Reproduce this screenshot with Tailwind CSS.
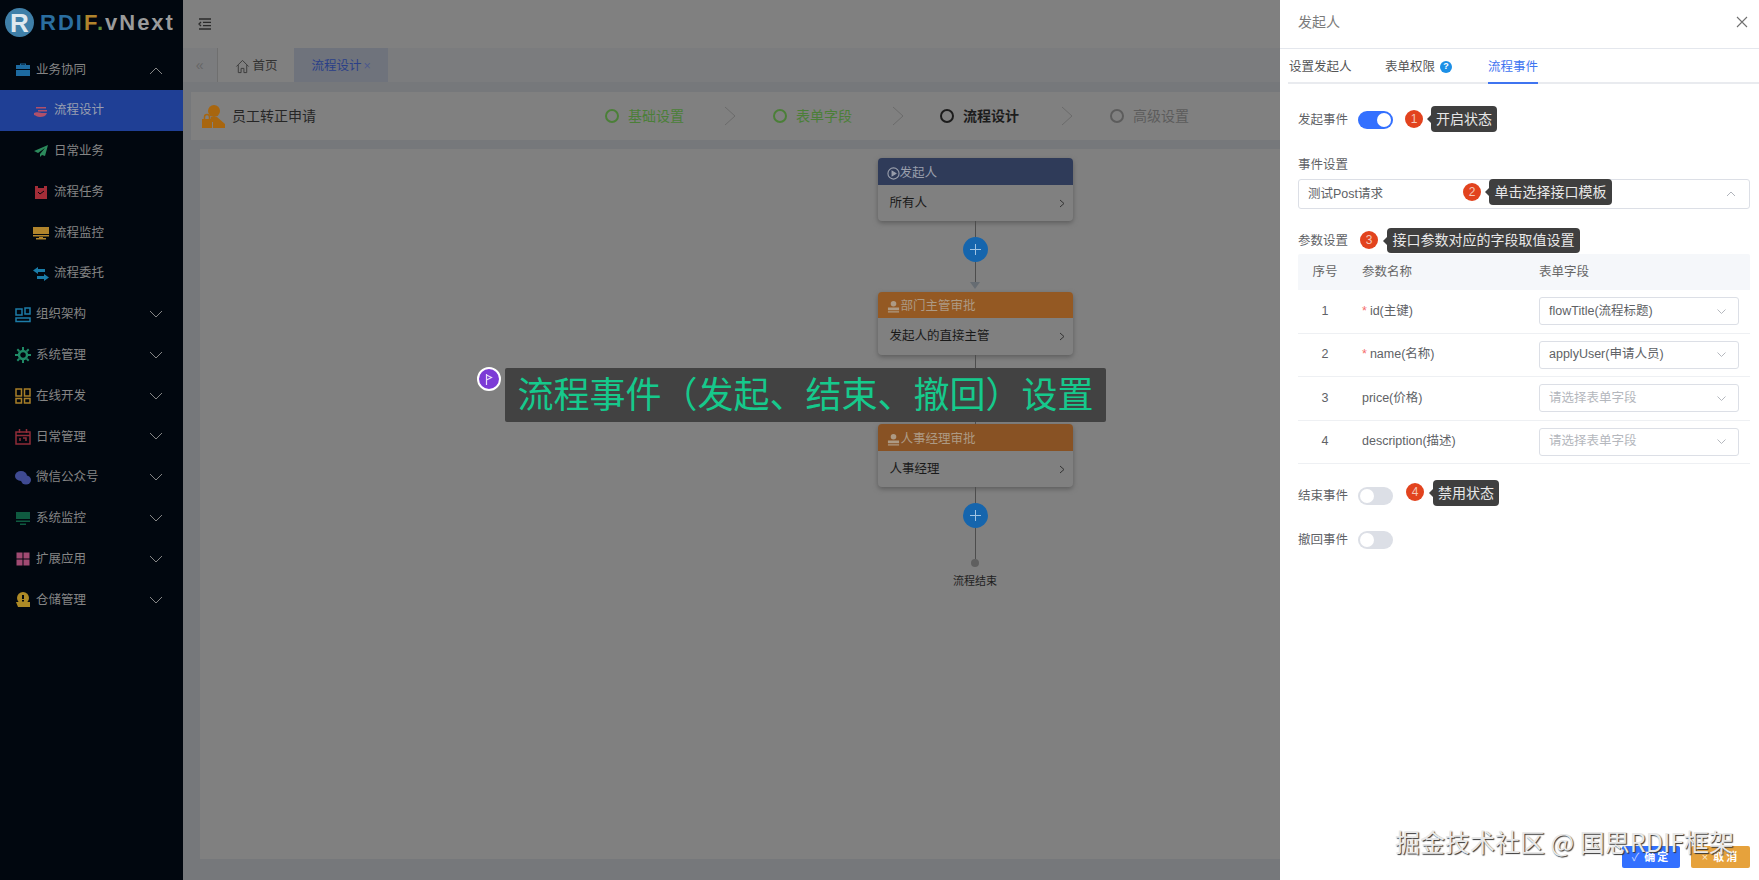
<!DOCTYPE html>
<html lang="zh-CN">
<head>
    <meta charset="UTF-8">
    <title>流程设计</title>
    <script src="https://cdn.jsdelivr.net/npm/@tailwindcss/browser@4"></script>
</head>
<body class="h-[880px] overflow-hidden font-['Liberation_Sans','Noto_Sans_CJK_SC',sans-serif] text-[12.5px]">
<div class="relative flex h-[880px] w-[1759px] overflow-hidden bg-[#808080]">

    <!-- 左侧菜单 -->
    <aside class="w-[183px] shrink-0 bg-[#01070f] text-[#858585]">
        <div class="flex h-[50px] items-center pb-[5px] pl-[5px]">
            <div class="flex h-[29px] w-[29px] items-center justify-center rounded-full bg-[#3f7fa8] text-[26px] leading-none font-bold text-[#dfe8ee]">R</div>
            <div class="ml-[6px] font-['Liberation_Sans'] text-[22px] leading-none font-bold tracking-[2px] whitespace-nowrap"><span class="text-[#2a6ea0]">RDI</span><span class="text-[#b0842c]">F</span><span class="text-[#5f8f3a]">.</span><span class="text-[#9a9a9a]">vNext</span></div>
        </div>

        <div class="flex h-[40px] items-center pl-[15px] pr-[20px]">
            <svg class="mr-[5px] h-4 w-4" viewBox="0 0 16 16"><path fill="#1d6aa0" d="M5 3V1.500h6V3h4v4H1V3zM6 3h4V2.500H6zM1 8h14v6H1z"/></svg>
            <span class="flex-1">业务协同</span>
            <svg class="h-[9px] w-[14px]" viewBox="0 0 14 9" fill="none" stroke="#858585"><path d="M1 8l6-6 6 6"/></svg>
        </div>
        <div class="flex h-[41px] items-center bg-[#1f3f95] pl-[33px]">
            <svg class="mr-[5px] h-4 w-4" viewBox="0 0 16 16"><path fill="#b0506a" d="M3 4h10v1.500H3zM5 7h9v1.500H5zM1 10c3-1.500 5 0 8 0h5c-1 3-4 4-7 4-3 0-4-1.500-6-2z"/></svg>
            <span class="text-[#9a9fb0]">流程设计</span>
        </div>
        <div class="flex h-[40.800px] items-center pl-[33px]">
            <svg class="mr-[5px] h-4 w-4" viewBox="0 0 16 16"><path fill="#2c8a5c" d="M15 2L1 8l4 2 7-5-5 6v3l2-2 3 1z"/></svg>
            <span>日常业务</span>
        </div>
        <div class="flex h-[40.800px] items-center pl-[33px]">
            <svg class="mr-[5px] h-4 w-4" viewBox="0 0 16 16"><path fill="#a32d38" d="M2 2h3v2h6V2h3v13H2z"/><path fill="none" stroke="#01070f" d="M5 8l2 2 4-3"/></svg>
            <span>流程任务</span>
        </div>
        <div class="flex h-[40.800px] items-center pl-[33px]">
            <svg class="mr-[5px] h-4 w-4" viewBox="0 0 16 16"><path fill="#b0842c" d="M0 2h16v7H0zM0 10h16v1.500H0zM6 12h4v1h3v1.500H3V13h3z"/></svg>
            <span>流程监控</span>
        </div>
        <div class="flex h-[40.800px] items-center pl-[33px]">
            <svg class="mr-[5px] h-4 w-4" viewBox="0 0 16 16"><path fill="#1a7ca8" d="M5 1v2h7v3H5v2L0 4.500zM11 8v2H4v3h7v2l5-3.500z"/></svg>
            <span>流程委托</span>
        </div>

        <div class="flex h-[40.800px] items-center pl-[15px] pr-[20px]">
            <svg class="mr-[5px] h-4 w-4" viewBox="0 0 16 16" fill="none" stroke="#1d7ca8" stroke-width="1.500"><path d="M1 2h6v6H1zM10 1h5v6h-5zM1 11h14v3.500H1z"/></svg>
            <span class="flex-1">组织架构</span>
            <svg class="h-[9px] w-[14px]" viewBox="0 0 14 9" fill="none" stroke="#858585"><path d="M1 1l6 6 6-6"/></svg>
        </div>
        <div class="flex h-[40.800px] items-center pl-[15px] pr-[20px]">
            <svg class="mr-[5px] h-4 w-4" viewBox="0 0 16 16" fill="none" stroke="#1f8a66" stroke-width="2.500"><circle cx="8" cy="8" r="4"/><path stroke-width="2" d="M8 0v3M8 13v3M0 8h3M13 8h3M2.300 2.300l2 2M11.700 11.700l2 2M13.700 2.300l-2 2M4.300 11.700l-2 2"/></svg>
            <span class="flex-1">系统管理</span>
            <svg class="h-[9px] w-[14px]" viewBox="0 0 14 9" fill="none" stroke="#858585"><path d="M1 1l6 6 6-6"/></svg>
        </div>
        <div class="flex h-[40.800px] items-center pl-[15px] pr-[20px]">
            <svg class="mr-[5px] h-4 w-4" viewBox="0 0 16 16" fill="none" stroke="#a87f28" stroke-width="1.500"><path d="M1 1h5.500v7H1zM9.500 1H15v7H9.500zM1 10.500h5.500V15H1zM9.500 10.500H15V15H9.500z"/></svg>
            <span class="flex-1">在线开发</span>
            <svg class="h-[9px] w-[14px]" viewBox="0 0 14 9" fill="none" stroke="#858585"><path d="M1 1l6 6 6-6"/></svg>
        </div>
        <div class="flex h-[40.800px] items-center pl-[15px] pr-[20px]">
            <svg class="mr-[5px] h-4 w-4" viewBox="0 0 16 16" fill="none" stroke="#8f2c38" stroke-width="1.500"><path d="M1 3h14v12H1zM1 6.500h14M4.500 0v4M11.500 0v4M5 9v3M8 9h3v3"/></svg>
            <span class="flex-1">日常管理</span>
            <svg class="h-[9px] w-[14px]" viewBox="0 0 14 9" fill="none" stroke="#858585"><path d="M1 1l6 6 6-6"/></svg>
        </div>
        <div class="flex h-[40.800px] items-center pl-[15px] pr-[20px]">
            <svg class="mr-[5px] h-4 w-4" viewBox="0 0 16 16" fill="#3f4a92"><ellipse cx="6" cy="6" rx="6" ry="5"/><ellipse cx="11" cy="10" rx="5" ry="4.500"/></svg>
            <span class="flex-1">微信公众号</span>
            <svg class="h-[9px] w-[14px]" viewBox="0 0 14 9" fill="none" stroke="#858585"><path d="M1 1l6 6 6-6"/></svg>
        </div>
        <div class="flex h-[40.800px] items-center pl-[15px] pr-[20px]">
            <svg class="mr-[5px] h-4 w-4" viewBox="0 0 16 16" fill="#0f5a40"><path d="M1 1h14v7H1zM1 9.500h14V11H1zM5 12.500h6V14H5z"/></svg>
            <span class="flex-1">系统监控</span>
            <svg class="h-[9px] w-[14px]" viewBox="0 0 14 9" fill="none" stroke="#858585"><path d="M1 1l6 6 6-6"/></svg>
        </div>
        <div class="flex h-[40.800px] items-center pl-[15px] pr-[20px]">
            <svg class="mr-[5px] h-4 w-4" viewBox="0 0 16 16" fill="#a04a72"><path d="M1.500 1.500h6v6h-6zM8.500 1.500h6v6h-6zM1.500 8.500h6v6h-6zM8.500 8.500h6v6h-6z"/></svg>
            <span class="flex-1">扩展应用</span>
            <svg class="h-[9px] w-[14px]" viewBox="0 0 14 9" fill="none" stroke="#858585"><path d="M1 1l6 6 6-6"/></svg>
        </div>
        <div class="flex h-[40.800px] items-center pl-[15px] pr-[20px]">
            <svg class="mr-[5px] h-4 w-4" viewBox="0 0 16 16"><circle cx="8" cy="6" r="6" fill="#ad8a26"/><path fill="#ad8a26" d="M1 10h14v5H3z"/><path fill="#01070f" d="M7 3h2v4H7zM7 8h2v1.500H7z"/></svg>
            <span class="flex-1">仓储管理</span>
            <svg class="h-[9px] w-[14px]" viewBox="0 0 14 9" fill="none" stroke="#858585"><path d="M1 1l6 6 6-6"/></svg>
        </div>
    </aside>

    <!-- 主区域 -->
    <main class="flex min-w-0 flex-1 flex-col bg-[#76787b]">
        <div class="flex h-[48px] shrink-0 items-center bg-[#808080] pl-[15px]">
            <svg class="h-[14px] w-[14px]" viewBox="0 0 14 14" fill="none" stroke="#2a2a2a" stroke-width="1.300"><path d="M1 2h12M5 5.300h8M5 8.600h8M1 12h12M3 5L1 7l2 2"/></svg>
        </div>
        <div class="flex h-[34px] shrink-0 items-center bg-[#7b7c7e] text-[12.5px]">
            <div class="flex h-full w-[34.500px] items-center justify-center border-r border-[#6f6f6f] text-[#666] text-[14px]">«</div>
            <div class="flex h-full w-[76px] items-center bg-[#808080] pt-[2px] pl-[17px] text-[#333]">
                <svg class="mr-[3px] h-[15px] w-[15px]" viewBox="0 0 16 16" fill="none" stroke="#3a3a3a"><path d="M1.500 8L8 1.500 14.500 8M3.500 6.500V14.500H6.500V10h3v4.500h3V6.500"/></svg>
                首页
            </div>
            <div class="flex h-full w-[94px] items-center bg-[#6f737c] pt-[2px] pl-[18px] text-[#2a3f88]">流程设计<span class="ml-[2px] text-[#4d5a8c]">×</span></div>
        </div>

        <div class="flex flex-1 flex-col pt-[10px] pl-[8px]">
            <div class="flex h-[48px] shrink-0 items-center bg-[#808080] pl-[10px] text-[14px] text-[#262626]">
                <svg class="mr-[7px] h-[24px] w-[24px]" viewBox="0 0 24 24"><circle cx="13" cy="7" r="6" fill="#a8660f"/><path fill="#a8660f" d="M10 13h6l8 7v4H12v-6H9z"/><path fill="#a8660f" d="M1 15h10v9H1z"/><path fill="none" stroke="#a8660f" stroke-width="1.500" d="M3.500 15v-2a2.500 2.500 0 015 0v2"/></svg>
                <span class="w-[373px]">员工转正申请</span>
                <div class="flex items-center">
                    <div class="flex w-[168px] items-center text-[#4b7f38]">
                        <span class="mr-[9px] h-[14px] w-[14px] rounded-full border-2 border-[#4b7f38]"></span>基础设置
                        <svg class="ml-[40px] h-[20px] w-[12px]" viewBox="0 0 12 20" fill="none" stroke="#6b6b6b"><path d="M1 1l10 9-10 9"/></svg>
                    </div>
                    <div class="flex w-[167px] items-center text-[#4b7f38]">
                        <span class="mr-[9px] h-[14px] w-[14px] rounded-full border-2 border-[#4b7f38]"></span>表单字段
                        <svg class="ml-[40px] h-[20px] w-[12px]" viewBox="0 0 12 20" fill="none" stroke="#6b6b6b"><path d="M1 1l10 9-10 9"/></svg>
                    </div>
                    <div class="flex w-[170px] items-center font-bold text-[#1c1c1c]">
                        <span class="mr-[9px] h-[14px] w-[14px] rounded-full border-2 border-[#1c1c1c]"></span>流程设计
                        <svg class="ml-[42px] h-[20px] w-[12px]" viewBox="0 0 12 20" fill="none" stroke="#6b6b6b"><path d="M1 1l10 9-10 9"/></svg>
                    </div>
                    <div class="flex items-center text-[#5c5c5c]">
                        <span class="mr-[9px] h-[14px] w-[14px] rounded-full border-2 border-[#5c5c5c]"></span>高级设置
                    </div>
                </div>
            </div>

            <!-- 流程画布 -->
            <div class="mt-[9px] mr-[9px] mb-[21px] ml-[9px] flex flex-1 flex-col items-center bg-[#808080] pt-[9px]">
                <div class="h-[63px] w-[195px] shrink-0 overflow-hidden rounded-[4px] bg-[#808080] shadow-[0_2px_5px_#5c5c5c]">
                    <div class="flex h-[27px] items-center bg-[#2f3b59] pt-[3px] pl-[9px] text-[#9a9fac]">
                        <svg class="h-[13px] w-[13px]" viewBox="0 0 14 14" fill="none" stroke="#9a9fac" stroke-width="1.200"><circle cx="7" cy="7" r="6"/><path fill="#9a9fac" d="M5.500 4.500l4 2.500-4 2.500z"/></svg>
                        发起人
                    </div>
                    <div class="flex h-[36px] items-center justify-between px-[12px] pt-[1px] pr-[8px] text-[#1a1a1a]">所有人<svg class="h-[9px] w-[6px]" viewBox="0 0 6 9" fill="none" stroke="#333"><path d="M1 1l4 3.500L1 8"/></svg></div>
                </div>
                <div class="h-[16px] w-px bg-[#4d4d4d]"></div>
                <div class="flex h-[25px] w-[25px] shrink-0 items-center justify-center rounded-full bg-[#1565ad]"><svg class="h-[11px] w-[11px]" viewBox="0 0 11 11" stroke="#9fc3e3"><path d="M5.500 0v11M0 5.500h11"/></svg></div>
                <div class="h-[20px] w-px bg-[#4d4d4d]"></div>
                <svg class="h-[7px] w-[10px] shrink-0" viewBox="0 0 10 7"><path fill="#666c72" d="M0 0h10L5 7z"/></svg>
                <div class="h-[3px]"></div>

                <div class="h-[63px] w-[195px] shrink-0 overflow-hidden rounded-[4px] bg-[#808080] shadow-[0_2px_5px_#5c5c5c]">
                    <div class="flex h-[26px] items-center bg-[#945923] pt-[3px] pl-[9px] text-[#ad9a84]">
                        <svg class="mr-[1px] h-[13px] w-[13px]" viewBox="0 0 14 14" fill="#ad9a84"><circle cx="7" cy="4" r="3"/><path d="M1 8h12v3H1zM1 12h12v1.500H1z"/></svg>
                        部门主管审批
                    </div>
                    <div class="flex h-[37px] items-center justify-between px-[12px] pr-[8px] text-[#1a1a1a]">发起人的直接主管<svg class="h-[9px] w-[6px]" viewBox="0 0 6 9" fill="none" stroke="#333"><path d="M1 1l4 3.500L1 8"/></svg></div>
                </div>
                <div class="h-[22px] w-px bg-[#4d4d4d]"></div>
                <div class="h-[25px] w-[25px] shrink-0 rounded-full bg-[#1565ad]"></div>
                <div class="h-[22px] w-px bg-[#4d4d4d]"></div>

                <div class="h-[63px] w-[195px] shrink-0 overflow-hidden rounded-[4px] bg-[#808080] shadow-[0_2px_5px_#5c5c5c]">
                    <div class="flex h-[27px] items-center bg-[#885224] pt-[3px] pl-[9px] text-[#ad9a84]">
                        <svg class="mr-[1px] h-[13px] w-[13px]" viewBox="0 0 14 14" fill="#ad9a84"><circle cx="7" cy="4" r="3"/><path d="M1 8h12v3H1zM1 12h12v1.500H1z"/></svg>
                        人事经理审批
                    </div>
                    <div class="flex h-[36px] items-center justify-between px-[12px] pt-[1px] pr-[8px] text-[#1a1a1a]">人事经理<svg class="h-[9px] w-[6px]" viewBox="0 0 6 9" fill="none" stroke="#333"><path d="M1 1l4 3.500L1 8"/></svg></div>
                </div>
                <div class="h-[16px] w-px bg-[#4d4d4d]"></div>
                <div class="flex h-[25px] w-[25px] shrink-0 items-center justify-center rounded-full bg-[#1565ad]"><svg class="h-[11px] w-[11px]" viewBox="0 0 11 11" stroke="#9fc3e3"><path d="M5.500 0v11M0 5.500h11"/></svg></div>
                <div class="h-[31px] w-px bg-[#4d4d4d]"></div>
                <div class="h-[8px] w-[8px] rounded-full bg-[#5f5f5f]"></div>
                <div class="mt-[6px] text-[11px] text-[#1f1f1f]">流程结束</div>
            </div>
        </div>
    </main>

    <!-- 遮罩上的说明文字 -->
    <div class="absolute top-[367px] left-[477px] flex h-[24px] w-[24px] items-center justify-center rounded-full border-2 border-white bg-[#7c3bd6]">
        <svg class="h-[11px] w-[8px]" viewBox="0 0 8 11" fill="none" stroke="#e8dcf8" stroke-width="1.200"><path d="M1.500 0v11M1.500 1l5 2.500-5 2.500"/></svg>
    </div>
    <div class="absolute top-[368px] left-[505px] flex h-[54px] w-[601px] items-center justify-center rounded-[2px] bg-[#424242] pt-[2px] text-[36px] whitespace-nowrap text-[#16c98c]">流程事件（发起、结束、撤回）设置</div>

    <!-- 右侧抽屉 -->
    <section class="absolute top-0 right-0 flex h-[880px] w-[479px] flex-col bg-white text-[#606266]">
        <div class="flex h-[49px] shrink-0 items-center justify-between border-b border-[#e4e7ed] pr-[11px] pb-[4px] pl-[18px]">
            <span class="text-[14px] text-[#7b7b7b]">发起人</span>
            <svg class="h-[12px] w-[12px]" viewBox="0 0 12 12" stroke="#707070" stroke-width="1.100"><path d="M1 1l10 10M11 1L1 11"/></svg>
        </div>
        <div class="ml-[8px] flex h-[35px] shrink-0 border-b-2 border-[#e9ebef] text-[#555]">
            <div class="flex w-[97px] items-center pt-[3px] pl-[1px]">设置发起人</div>
            <div class="flex w-[103px] items-center pt-[3px]">表单权限
                <span class="ml-[5px] flex h-[12px] w-[12px] items-center justify-center rounded-full bg-[#1c8fe6] text-[9px] font-bold text-white">?</span>
            </div>
            <div class="-mb-[2px] flex w-[50px] items-center border-b-2 border-[#3f74f0] pt-[3px] text-[#3f74f0]">流程事件</div>
        </div>

        <div class="flex flex-col px-[18px] pr-[9px]">
            <div class="mt-[27px] flex h-[18px] items-center">
                <span class="w-[60px]">发起事件</span>
                <span class="flex h-[18px] w-[35px] items-center justify-end rounded-full bg-[#3370ff] pr-[2px]"><span class="h-[14px] w-[14px] rounded-full bg-white"></span></span>
            </div>
            <div class="mt-[27px] h-[18px] leading-[18px]">事件设置</div>
            <div class="mt-[5px] mb-[1px] flex h-[30px] items-center justify-between rounded-[3px] border border-[#dcdfe6] pr-[13px] pl-[9px] text-[#606266]">测试Post请求
                <svg class="h-[6px] w-[10px]" viewBox="0 0 10 6" fill="none" stroke="#b0b4bb"><path d="M1 5l4-4 4 4"/></svg>
            </div>
            <div class="mt-[22px] h-[18px] leading-[18px]">参数设置</div>

            <div class="mt-[4px] grid h-[36px] grid-cols-[54px_10px_177px_1fr] items-center rounded-t-[2px] bg-[#f5f7fa] text-[#666]">
                <span class="text-center leading-none">序号</span><span></span><span>参数名称</span><span>表单字段</span>
            </div>
            <div class="grid h-[43.500px] grid-cols-[54px_10px_177px_200px] items-center border-b border-[#eef0f3]">
                <span class="text-center">1</span><span></span>
                <span class="flex"><span class="mr-[3px] text-[#f56c6c]">*</span>id(主键)</span>
                <span class="flex h-[28px] items-center justify-between rounded-[3px] border border-[#dcdfe6] pr-[12px] pl-[9px]">flowTitle(流程标题)<svg class="h-[5px] w-[9px]" viewBox="0 0 9 5" fill="none" stroke="#b5b8be"><path d="M.5.500l4 4 4-4"/></svg></span>
            </div>
            <div class="grid h-[43.500px] grid-cols-[54px_10px_177px_200px] items-center border-b border-[#eef0f3]">
                <span class="text-center">2</span><span></span>
                <span class="flex"><span class="mr-[3px] text-[#f56c6c]">*</span>name(名称)</span>
                <span class="flex h-[28px] items-center justify-between rounded-[3px] border border-[#dcdfe6] pr-[12px] pl-[9px]">applyUser(申请人员)<svg class="h-[5px] w-[9px]" viewBox="0 0 9 5" fill="none" stroke="#b5b8be"><path d="M.5.500l4 4 4-4"/></svg></span>
            </div>
            <div class="grid h-[43.500px] grid-cols-[54px_10px_177px_200px] items-center border-b border-[#eef0f3]">
                <span class="text-center">3</span><span></span>
                <span>price(价格)</span>
                <span class="flex h-[28px] items-center justify-between rounded-[3px] border border-[#dcdfe6] pr-[12px] pl-[9px] text-[#b4b7bd]">请选择表单字段<svg class="h-[5px] w-[9px]" viewBox="0 0 9 5" fill="none" stroke="#b5b8be"><path d="M.5.500l4 4 4-4"/></svg></span>
            </div>
            <div class="grid h-[43.500px] grid-cols-[54px_10px_177px_200px] items-center border-b border-[#eef0f3]">
                <span class="text-center">4</span><span></span>
                <span>description(描述)</span>
                <span class="flex h-[28px] items-center justify-between rounded-[3px] border border-[#dcdfe6] pr-[12px] pl-[9px] text-[#b4b7bd]">请选择表单字段<svg class="h-[5px] w-[9px]" viewBox="0 0 9 5" fill="none" stroke="#b5b8be"><path d="M.5.500l4 4 4-4"/></svg></span>
            </div>

            <div class="mt-[23px] flex h-[18px] items-center">
                <span class="w-[60px]">结束事件</span>
                <span class="flex h-[18px] w-[35px] items-center rounded-full bg-[#dcdfe6] pl-[2px]"><span class="h-[14px] w-[14px] rounded-full bg-white"></span></span>
            </div>
            <div class="mt-[26px] flex h-[18px] items-center">
                <span class="w-[60px]">撤回事件</span>
                <span class="flex h-[18px] w-[35px] items-center rounded-full bg-[#dcdfe6] pl-[2px]"><span class="h-[14px] w-[14px] rounded-full bg-white"></span></span>
            </div>
        </div>

        <!-- 步骤标注 -->
        <span class="absolute top-[110px] left-[125px] flex h-[18px] w-[18px] items-center justify-center rounded-full bg-[#e2431e] text-[12px] text-[#f4c7b8]">1</span>
        <div class="absolute top-[106px] left-[151px] flex h-[26px] w-[66px] items-center justify-center rounded-[4px] bg-[#3f3f3f] text-[14px] text-[#e8e8e8] before:absolute before:top-[9px] before:-left-[4px] before:border-y-4 before:border-r-4 before:border-y-transparent before:border-r-[#3f3f3f]">开启状态</div>
        <span class="absolute top-[183px] left-[183px] flex h-[18px] w-[18px] items-center justify-center rounded-full bg-[#e2431e] text-[12px] text-[#f4c7b8]">2</span>
        <div class="absolute top-[179px] left-[209px] flex h-[26px] w-[123px] items-center justify-center rounded-[4px] bg-[#3f3f3f] text-[14px] text-[#e8e8e8] before:absolute before:top-[9px] before:-left-[4px] before:border-y-4 before:border-r-4 before:border-y-transparent before:border-r-[#3f3f3f]">单击选择接口模板</div>
        <span class="absolute top-[231px] left-[80px] flex h-[18px] w-[18px] items-center justify-center rounded-full bg-[#e2431e] text-[12px] text-[#f4c7b8]">3</span>
        <div class="absolute top-[228px] left-[107px] flex h-[25px] w-[193px] items-center justify-center rounded-[4px] bg-[#3f3f3f] text-[14px] text-[#e8e8e8] before:absolute before:top-[9px] before:-left-[4px] before:border-y-4 before:border-r-4 before:border-y-transparent before:border-r-[#3f3f3f]">接口参数对应的字段取值设置</div>
        <span class="absolute top-[483px] left-[126px] flex h-[18px] w-[18px] items-center justify-center rounded-full bg-[#e2431e] text-[12px] text-[#f4c7b8]">4</span>
        <div class="absolute top-[480px] left-[153px] flex h-[26px] w-[66px] items-center justify-center rounded-[4px] bg-[#3f3f3f] text-[14px] text-[#e8e8e8] before:absolute before:top-[9px] before:-left-[4px] before:border-y-4 before:border-r-4 before:border-y-transparent before:border-r-[#3f3f3f]">禁用状态</div>

        <!-- 底部按钮 -->
        <div class="absolute right-[9px] bottom-[12px] flex gap-[11px] text-[11px] font-bold tracking-[2px] text-white">
            <button class="flex h-[22px] w-[58px] items-center justify-center rounded-[2px] bg-[#3370ff]"><span class="mr-[3px] font-normal text-[#c8d8ff]">✓</span>确定</button>
            <button class="flex h-[22px] w-[59px] items-center justify-center rounded-[2px] bg-[#e6a23c]"><span class="mr-[3px] font-normal text-[#fbe6c6]">×</span>取消</button>
        </div>
    </section>

    <!-- 水印 -->
    <div class="absolute top-[824px] left-[1395px] font-['Noto_Sans_CJK_SC'] text-[25px] leading-[34px] whitespace-nowrap text-[#e8e8e8] [text-shadow:1px_1px_1px_#333]">掘金技术社区 @ 国思RDIF框架</div>
</div>
</body>
</html>
